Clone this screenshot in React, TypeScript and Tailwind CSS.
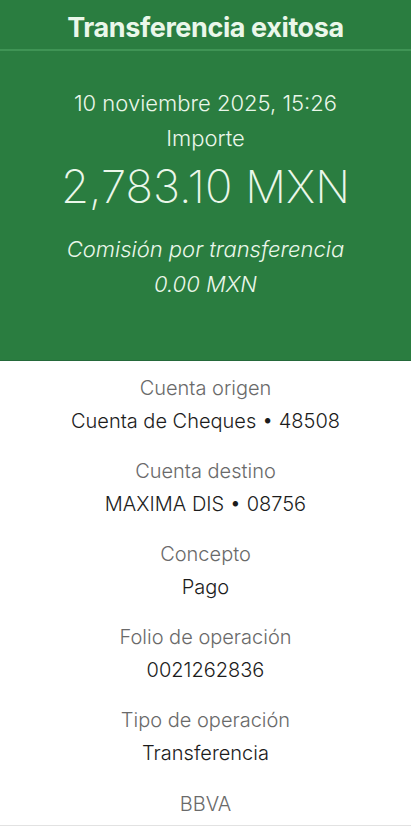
import React from "react";

const rows = [
  ["Cuenta origen", "Cuenta de Cheques • 48508"],
  ["Cuenta destino", "MAXIMA DIS • 08756"],
  ["Concepto", "Pago"],
  ["Folio de operación", "0021262836"],
  ["Tipo de operación", "Transferencia"],
];

export default function App() {
  return (
    <div
      className="w-[411px] h-[828px] bg-white flex flex-col overflow-hidden"
      style={{ fontFamily: "Inter, 'Open Sans', sans-serif" }}
    >
      <div className="bg-[#2a7d40] text-[#eaf7ea] flex flex-col items-center h-[361px] border-b border-[#24693a]">
        <div className="h-[51px] w-full flex items-center justify-center border-b-2 border-[#3f9455] pt-[5px]">
          <span className="text-[27px] font-bold leading-none tracking-[-0.4px]">Transferencia exitosa</span>
        </div>
        <div className="mt-[39px] text-[22px] font-light leading-[26px]">10 noviembre 2025, 15:26</div>
        <div className="mt-[9px] text-[22px] font-light leading-[26px]">Importe</div>
        <div className="mt-[10px] text-[45.5px] font-extralight leading-[52px]">2,783.10 MXN</div>
        <div className="mt-[23px] text-[22px] italic font-light leading-[26px]">Comisión por transferencia</div>
        <div className="mt-[9px] text-[22px] italic font-light leading-[26px]">0.00 MXN</div>
      </div>
      <div className="flex flex-col items-center pt-[14px]">
        {rows.map(([label, value]) => (
          <div key={label} className="flex flex-col items-center h-[83px]">
            <div className="text-[20px] font-light text-[#6a6a6a] leading-[26px]">{label}</div>
            <div className="mt-[7px] text-[20px] font-light text-[#1c1c1c] leading-[26px]">{value}</div>
          </div>
        ))}
        <div className="mt-[1px] text-[20px] font-light text-[#6a6a6a] leading-[26px]">BBVA</div>
      </div>
      <div className="mt-auto mb-[2px] h-[1px] bg-[#e2e2e2] w-full" />
    </div>
  );
}
